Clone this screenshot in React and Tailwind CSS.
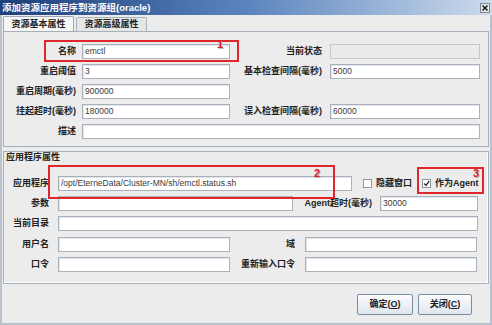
import React from "react";

const F = "font-['Liberation_Sans','Noto_Sans_CJK_SC',sans-serif]";
const IN = "font-['Liberation_Sans',Arial,sans-serif]";

function Label({ w, children, className = "" }) {
  return (
    <div
      className={`${F} shrink-0 text-right text-[9px] font-bold leading-[15px] text-[#222] whitespace-nowrap ${className}`}
      style={{ width: w }}
    >
      {children}
    </div>
  );
}

function Input({ w, value = "", disabled = false, className = "" }) {
  return (
    <div
      className={`${IN} h-[15px] shrink-0 border border-[#a9b1ba] pl-[2px] text-[8.5px] leading-[13px] text-[#3a3a3a] overflow-hidden whitespace-nowrap ${
        disabled ? "bg-[#ebebeb] border-[#c4c8cc]" : "bg-white shadow-[inset_1px_1px_0_#e2e6ea]"
      } ${className}`}
      style={{ width: w }}
    >
      {value}
    </div>
  );
}

function Check({ checked, label }) {
  return (
    <div className="flex items-center gap-[4px]">
      <div className="w-[9px] h-[9px] border border-[#8b98a6] bg-white flex items-center justify-center">
        {checked && (
          <svg width="7" height="7" viewBox="0 0 7 7">
            <path d="M1 3.5 L3 5.5 L6.2 1" stroke="#333" strokeWidth="1.3" fill="none" />
          </svg>
        )}
      </div>
      <span className={`${F} text-[9px] font-bold leading-[15px] text-[#222] whitespace-nowrap`}>{label}</span>
    </div>
  );
}

function Row({ children, className = "" }) {
  return <div className={`flex items-center h-[15px] ${className}`}>{children}</div>;
}

function RedBox({ className, num, numClass }) {
  return (
    <>
      <div className={`absolute border-2 border-[#e0262a] ${className}`} />
      <div
        className={`absolute ${IN} text-[11px] font-bold leading-none text-[#d91f26] [text-shadow:1px_1px_0_#b8b8b8] ${numClass}`}
      >
        {num}
      </div>
    </>
  );
}

export default function App() {
  return (
    <div className="relative w-[492px] h-[325px] bg-[#ececec] overflow-hidden flex flex-col">
      {/* Title bar */}
      <div className="h-[15px] shrink-0 flex items-center justify-between bg-linear-to-r from-[#1d3f7a] via-[#5b84bd] to-[#cddbec] pl-[2px] pr-[2px]">
        <span className={`${F} text-[9.5px] font-bold leading-[15px] text-white whitespace-nowrap`}>
          添加资源应用程序到资源组(oracle)
        </span>
        <div className="w-[10px] h-[10px] bg-[#e4e4e4] border border-[#7f8a96] flex items-center justify-center">
          <svg width="6" height="6" viewBox="0 0 6 6">
            <path d="M0.5 0.5 L5.5 5.5 M5.5 0.5 L0.5 5.5" stroke="#111" strokeWidth="1.4" />
          </svg>
        </div>
      </div>

      {/* Body */}
      <div className="flex-1 flex flex-col border-l-2 border-r-2 border-b-2 border-[#b9c3cf] px-[1px]">
        {/* Tabs */}
        <div className="h-[16px] flex items-end gap-[2px]">
          <div className={`${F} w-[71px] h-[15px] bg-[#f6f6f6] border border-b-0 border-[#9ea7b2] rounded-t-[2px] text-center text-[9px] font-bold leading-[14px] text-[#222]`}>
            资源基本属性
          </div>
          <div className={`${F} w-[71px] h-[14px] bg-[#e6e6e6] border border-b-0 border-[#a9b1bb] rounded-t-[2px] text-center text-[9px] font-bold leading-[13px] text-[#222]`}>
            资源高级属性
          </div>
        </div>

        {/* Tab panel */}
        <div className="h-[116px] border border-[#a6afba] bg-[#ececec] pt-[12px] flex flex-col gap-[5px]">
          <Row>
            <Label w={72}>名称</Label>
            <div className="w-[6px]" />
            <Input w={148} value="emctl" />
            <Label w={92}>当前状态</Label>
            <div className="w-[8px]" />
            <Input w={150} disabled />
          </Row>
          <Row>
            <Label w={72}>重启阈值</Label>
            <div className="w-[6px]" />
            <Input w={148} value="3" />
            <Label w={92}>基本检查间隔(毫秒)</Label>
            <div className="w-[8px]" />
            <Input w={150} value="5000" />
          </Row>
          <Row>
            <Label w={72}>重启周期(毫秒)</Label>
            <div className="w-[6px]" />
            <Input w={148} value="900000" />
          </Row>
          <Row>
            <Label w={72}>挂起超时(毫秒)</Label>
            <div className="w-[6px]" />
            <Input w={148} value="180000" />
            <Label w={92}>误入检查间隔(毫秒)</Label>
            <div className="w-[8px]" />
            <Input w={150} value="60000" />
          </Row>
          <Row>
            <Label w={72}>描述</Label>
            <div className="w-[6px]" />
            <Input w={398} />
          </Row>
        </div>

        {/* Group box */}
        <div className="mt-[4px] h-[133px] border border-[#a6afba] shadow-[inset_-1px_-1px_0_#ffffff] flex flex-col">
          <div className={`${F} pl-[2px] h-[12px] text-[9px] font-bold leading-[11px] text-[#222]`}>应用程序属性</div>
          <div className="mt-[12px] flex flex-col gap-[5px]">
            <Row>
              <Label w={45}>应用程序</Label>
              <div className="w-[9px]" />
              <Input w={294} value="/opt/EterneData/Cluster-MN/sh/emctl.status.sh" />
              <div className="w-[11px]" />
              <Check label="隐藏窗口" />
              <div className="w-[10px]" />
              <Check checked label="作为Agent" />
            </Row>
            <Row>
              <Label w={45}>参数</Label>
              <div className="w-[9px]" />
              <Input w={235} />
              <Label w={79}>Agent超时(毫秒)</Label>
              <div className="w-[8px]" />
              <Input w={98} value="30000" />
            </Row>
            <Row>
              <Label w={45}>当前目录</Label>
              <div className="w-[9px]" />
              <Input w={420} />
            </Row>
            <Row className="mt-[1px]">
              <Label w={45}>用户名</Label>
              <div className="w-[9px]" />
              <Input w={172} />
              <Label w={65}>域</Label>
              <div className="w-[10px]" />
              <Input w={172} />
            </Row>
            <Row>
              <Label w={45}>口令</Label>
              <div className="w-[9px]" />
              <Input w={172} />
              <Label w={65}>重新输入口令</Label>
              <div className="w-[10px]" />
              <Input w={172} />
            </Row>
          </div>
        </div>

        {/* Buttons */}
        <div className="mt-[10px] flex justify-end gap-[5px] pr-[17px]">
          <button className={`${F} w-[56px] h-[21px] rounded-[2px] border border-[#7c8da2] bg-linear-to-b from-[#fbfcfd] to-[#dfe6ee] text-[9px] font-bold text-[#222]`}>
            确定(<span className="underline">O</span>)
          </button>
          <button className={`${F} w-[54px] h-[21px] rounded-[2px] border border-[#7c8da2] bg-linear-to-b from-[#fbfcfd] to-[#dfe6ee] text-[9px] font-bold text-[#222]`}>
            关闭(<span className="underline">C</span>)
          </button>
        </div>
      </div>

      {/* Annotations */}
      <RedBox className="left-[44px] top-[40px] w-[195px] h-[22px]" num="1" numClass="left-[217px] top-[39px]" />
      <RedBox className="left-[48px] top-[165px] w-[287px] h-[34px]" num="2" numClass="left-[314px] top-[168px]" />
      <RedBox className="left-[417px] top-[167px] w-[67px] h-[27px]" num="3" numClass="left-[473px] top-[168px]" />
    </div>
  );
}
